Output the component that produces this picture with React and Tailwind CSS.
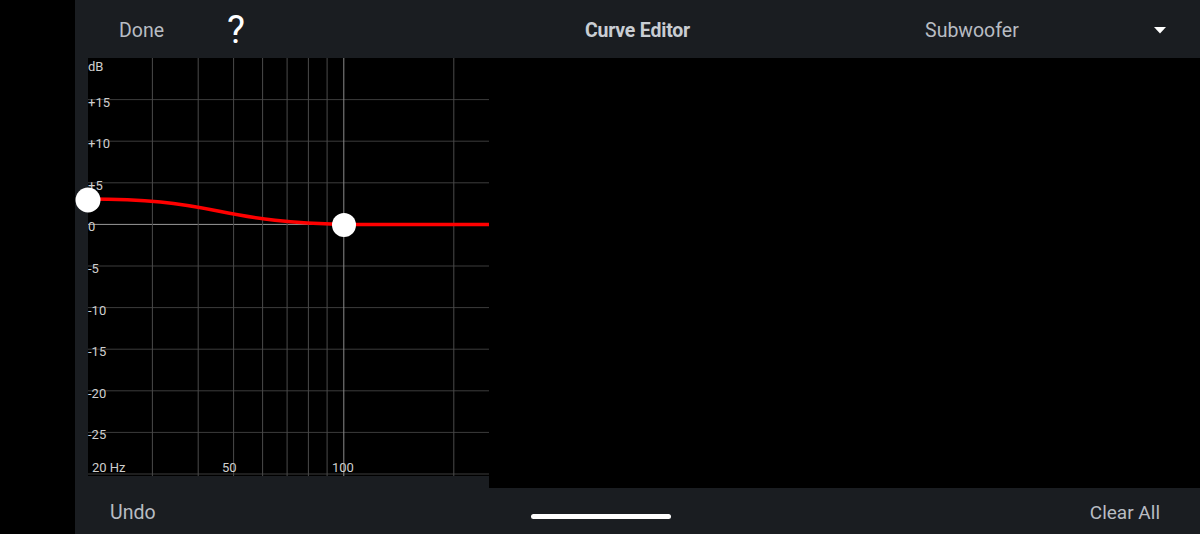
import React from "react";

const hLines = [41.6, 83.2, 124.8, 166.4, 208, 249.6, 291.2, 332.8, 374.4, 416];
const vLines = [64.4, 110.2, 145.6, 174.6, 199.1, 220.4, 239.1, 255.8, 365.8];
const dbLabels = [
  ["+15", 41.6],
  ["+10", 83.2],
  ["+5", 124.8],
  ["0", 166.4],
  ["-5", 208],
  ["-10", 249.6],
  ["-15", 291.2],
  ["-20", 332.8],
  ["-25", 374.4],
];

function Graph() {
  return (
    <svg width="401" height="418" viewBox="0 0 401 418" className="block overflow-visible" style={{ fontFamily: "Roboto, 'Liberation Sans', sans-serif" }}>
      <rect x="0" y="0" width="401" height="418" fill="#000" />
      {hLines.map((y) => (
        <line key={"h" + y} x1="0" x2="401" y1={y} y2={y} stroke={y === 166.4 ? "#9a9a9a" : "#3c3c3c"} strokeWidth="1" />
      ))}
      {vLines.map((x) => (
        <line key={"v" + x} x1={x} x2={x} y1="0" y2="418" stroke={x === 255.8 ? "#8a8a8a" : "#4a4a4a"} strokeWidth="1" />
      ))}
      <text x="0" y="13" fontSize="13" fill="#cfcfcf">dB</text>
      {dbLabels.map(([t, y]) => (
        <text key={t} x="0" y={y + 7} fontSize="13" fill="#cfcfcf">{t}</text>
      ))}
      <text x="4" y="414" fontSize="13" fill="#cfcfcf">20 Hz</text>
      <text x="134" y="414" fontSize="13" fill="#cfcfcf">50</text>
      <text x="244" y="414" fontSize="13" fill="#cfcfcf">100</text>
      <path d="M0,141 C60,141 90,145 130,153 S200,165.5 256,166.4 L401,166.4" fill="none" stroke="#ff0000" strokeWidth="3.5" />
      <circle cx="0" cy="142" r="12.5" fill="#fff" />
      <circle cx="256" cy="167" r="12" fill="#fff" />
    </svg>
  );
}

export default function App() {
  return (
    <div className="w-[1200px] h-[534px] flex bg-black overflow-hidden" style={{ fontFamily: "Roboto, 'Liberation Sans', sans-serif" }}>
      <div className="w-[75px] shrink-0 bg-black" />
      <div className="flex-1 flex flex-col bg-[#1a1d21]">
        <div className="h-[58px] shrink-0 pt-[3px] grid grid-cols-[1fr_auto_1fr] items-center">
          <div className="flex items-center pl-[44px]">
            <span className="text-[19.5px] text-[#b8bcc3]">Done</span>
            <span className="ml-[63px] -mt-[2px] text-[38px] leading-none text-white">?</span>
          </div>
          <div className="text-[19.5px] font-bold text-[#c9cdd3] tracking-[-0.2px]">Curve Editor</div>
          <div className="flex items-center pl-[235px] pr-[34px]">
            <span className="text-[19.5px] text-[#b8bcc3]">Subwoofer</span>
            <svg className="ml-auto -mt-[2px]" width="12" height="8" viewBox="0 0 12 8">
              <path d="M0,1 L12,1 L6,7.5 Z" fill="#fff" />
            </svg>
          </div>
        </div>
        <div className="h-[430px] shrink-0 flex">
          <div className="w-[13px] shrink-0" />
          <div className="w-[401px] shrink-0 h-[418px]">
            <Graph />
          </div>
          <div className="flex-1 bg-black" />
        </div>
        <div className="flex-1 flex items-center pt-[4px] pl-[35px] pr-[40px]">
          <span className="text-[19.5px] text-[#b8bcc3]">Undo</span>
          <div className="ml-[375px] mt-[6px] w-[140px] h-[5px] rounded-full bg-white" />
          <span className="ml-auto text-[19px] text-[#b8bcc3]">Clear All</span>
        </div>
      </div>
    </div>
  );
}
